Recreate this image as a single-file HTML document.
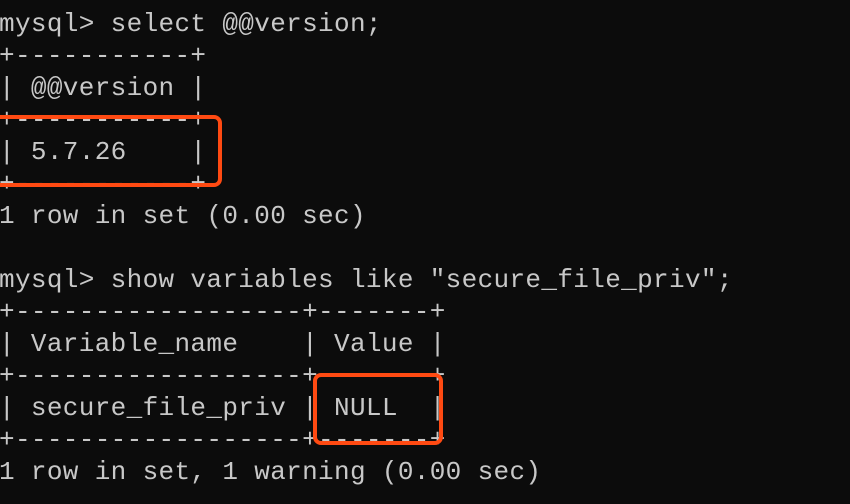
<!DOCTYPE html>
<html><head><meta charset="utf-8"><style>
html,body{margin:0;padding:0;background:#0c0c0c;width:850px;height:504px;overflow:hidden;position:relative}
pre{position:absolute;left:-1px;top:8px;margin:0;font-family:"Liberation Mono",monospace;font-size:26px;letter-spacing:0.35px;line-height:32px;color:#c8c8c8}
.b{position:absolute;border:4px solid #ff4a12;border-radius:8px}
</style></head><body>
<pre>mysql&gt; select @@version;
+-----------+
| @@version |
+-----------+
| 5.7.26    |
+-----------+
1 row in set (0.00 sec)

mysql&gt; show variables like "secure_file_priv";
+------------------+-------+
| Variable_name    | Value |
+------------------+-------+
| secure_file_priv | NULL  |
+------------------+-------+
1 row in set, 1 warning (0.00 sec)</pre>
<div class="b" style="left:-8px;top:115px;width:222px;height:64px"></div>
<div class="b" style="left:313px;top:373px;width:122px;height:64px"></div>
</body></html>
